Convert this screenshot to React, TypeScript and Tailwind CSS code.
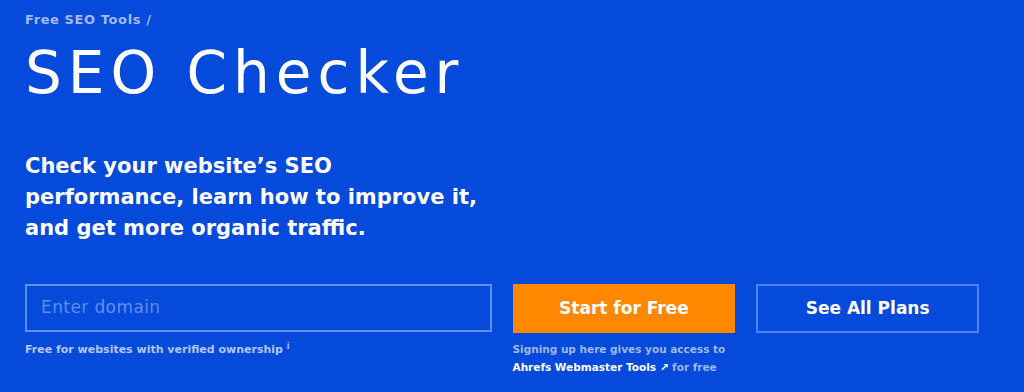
import React from "react";

export default function App() {
  return (
    <div
      className="w-[1024px] h-[392px] bg-[#054ADA] text-white overflow-hidden"
      style={{ fontFamily: "'DejaVu Sans', 'Liberation Sans', sans-serif" }}
    >
      <div className="pl-[25px] pr-[45px] pt-[11px]">
        <div className="text-[13px] leading-[18px] text-[#a3bbf1] font-bold tracking-[0.6px]">Free SEO Tools /</div>
        <h1 className="mt-[12px] text-[58px] leading-[64px] font-normal tracking-[6px]">SEO Checker</h1>
        <p className="mt-[46px] text-[21px] leading-[31px] font-bold">
          Check your website’s SEO
          <br />
          performance, learn how to improve it,
          <br />
          and get more organic traffic.
        </p>
        <div className="mt-[40px] grid grid-cols-4 gap-x-[21px]">
          <div className="col-span-2">
            <div className="h-[48px] border-2 border-[#5f8ff0] flex items-center px-[14px]">
              <span className="text-[17px] text-[#5f8ff0] tracking-[0.4px]">Enter domain</span>
            </div>
            <div className="mt-[11px] text-[11px] leading-[14px] text-[#b3c8f6] font-bold">
              Free for websites with verified ownership <sup className="text-[8px]">i</sup>
            </div>
          </div>
          <div>
            <div className="h-[49px] bg-[#FF8800] flex items-center justify-center text-[17px] font-bold">
              Start for Free
            </div>
            <div className="mt-[7px] text-[10.5px] leading-[18px] text-[#9fb8f2] font-bold whitespace-nowrap">
              Signing up here gives you access to
              <br />
              <span className="text-white">Ahrefs Webmaster Tools ↗</span> for free
            </div>
          </div>
          <div>
            <div className="h-[49px] border-2 border-[#4f83ee] flex items-center justify-center text-[17px] font-bold">
              See All Plans
            </div>
          </div>
        </div>
      </div>
    </div>
  );
}
